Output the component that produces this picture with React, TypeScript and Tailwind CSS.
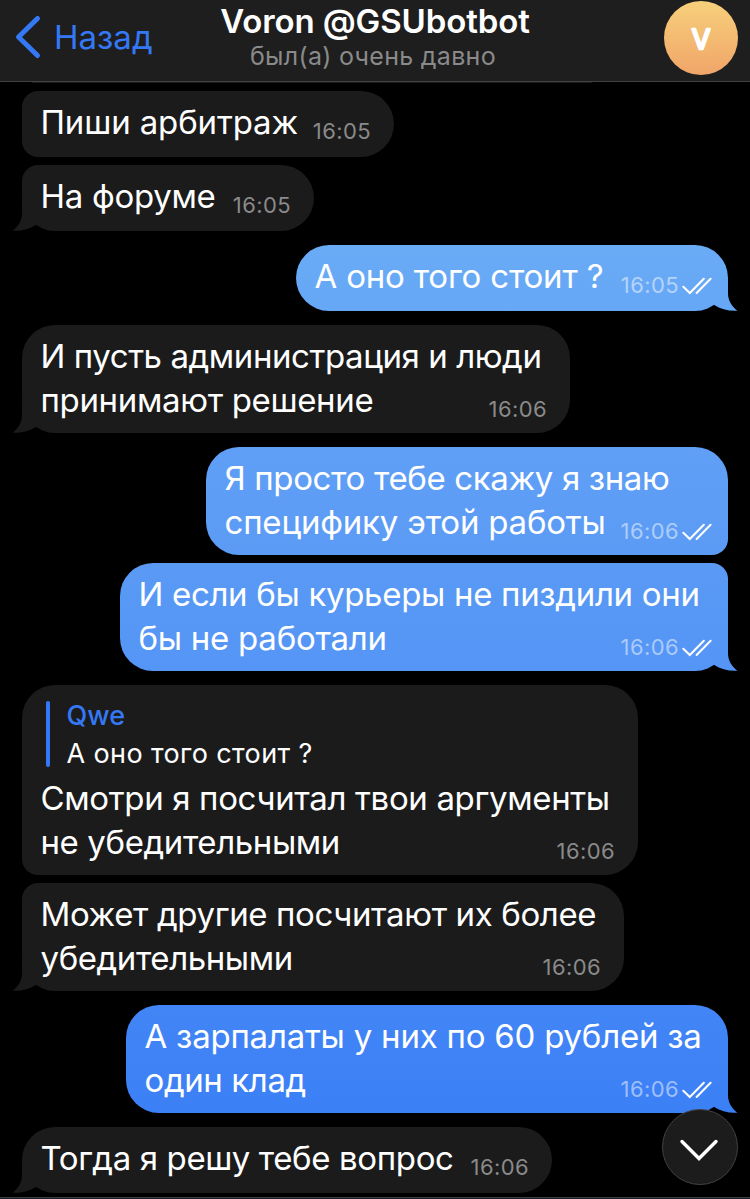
import clsx from 'clsx';

type Line = { text: string; track: string };

type Message = {
  out?: boolean;
  box: string;
  fill: string;
  tail?: string;
  time: string;
  quote?: { name: string; text: string };
  lines: Line[];
};

const messages: Message[] = [
  {
    box: 'mt-[8px] w-[372px] h-[66px] rounded-[33px] rounded-l-[16px]',
    fill: 'bg-[#1b1b1b]',
    time: '16:05',
    lines: [{ text: 'Пиши арбитраж', track: 'tracking-[-0.15px]' }],
  },
  {
    box: 'mt-[8px] w-[292px] h-[66px] rounded-[33px] rounded-tl-[16px]',
    fill: 'bg-[#1b1b1b]',
    tail: 'text-[#1b1b1b]',
    time: '16:05',
    lines: [{ text: 'На форуме', track: 'tracking-[-0.3px]' }],
  },
  {
    out: true,
    box: 'mt-[14px] w-[432px] h-[66px] rounded-[33px]',
    fill: 'bg-linear-to-b from-[#6aabf6] to-[#66a7f6]',
    tail: 'text-[#66a7f6]',
    time: '16:05',
    lines: [{ text: 'А оно того стоит ?', track: 'tracking-[-0.2px]' }],
  },
  {
    box: 'mt-[14px] w-[548px] h-[108px] rounded-[33px]',
    fill: 'bg-[#1b1b1b]',
    tail: 'text-[#1b1b1b]',
    time: '16:06',
    lines: [
      { text: 'И пусть администрация и люди', track: 'tracking-[-0.43px]' },
      { text: 'принимают решение', track: 'tracking-[-0.34px]' },
    ],
  },
  {
    out: true,
    box: 'mt-[14px] w-[522px] h-[108px] rounded-[33px] rounded-br-[16px]',
    fill: 'bg-linear-to-b from-[#609ff6] to-[#5b9bf5]',
    time: '16:06',
    lines: [
      { text: 'Я просто тебе скажу я знаю', track: 'tracking-[-0.36px]' },
      { text: 'специфику этой работы', track: 'tracking-[-0.2px]' },
    ],
  },
  {
    out: true,
    box: 'mt-[8px] w-[608px] h-[108px] rounded-[33px] rounded-tr-[16px]',
    fill: 'bg-linear-to-b from-[#5a9af5] to-[#5495f6]',
    tail: 'text-[#5495f6]',
    time: '16:06',
    lines: [
      { text: 'И если бы курьеры не пиздили они', track: 'tracking-[-0.32px]' },
      { text: 'бы не работали', track: 'tracking-[-0.26px]' },
    ],
  },
  {
    box: 'mt-[14px] w-[616px] h-[190px] rounded-[33px] rounded-bl-[16px]',
    fill: 'bg-[#1b1b1b]',
    time: '16:06',
    quote: { name: 'Qwe', text: 'А оно того стоит ?' },
    lines: [
      { text: 'Смотри я посчитал твои аргументы', track: 'tracking-[-0.35px]' },
      { text: 'не убедительными', track: 'tracking-[-0.4px]' },
    ],
  },
  {
    box: 'mt-[8px] w-[602px] h-[108px] rounded-[33px] rounded-tl-[16px]',
    fill: 'bg-[#1b1b1b]',
    tail: 'text-[#1b1b1b]',
    time: '16:06',
    lines: [
      { text: 'Может другие посчитают их более', track: 'tracking-[-0.38px]' },
      { text: 'убедительными', track: 'tracking-[-0.42px]' },
    ],
  },
  {
    out: true,
    box: 'mt-[14px] w-[602px] h-[108px] rounded-[33px]',
    fill: 'bg-linear-to-b from-[#4285f6] to-[#3c80f6]',
    tail: 'text-[#3c80f6]',
    time: '16:06',
    lines: [
      { text: 'А зарпалаты у них по 60 рублей за', track: 'tracking-[-0.23px]' },
      { text: 'один клад', track: 'tracking-[-0.4px]' },
    ],
  },
  {
    box: 'mt-[14px] w-[530px] h-[66px] rounded-[33px]',
    fill: 'bg-[#1b1b1b]',
    tail: 'text-[#1b1b1b]',
    time: '16:06',
    lines: [{ text: 'Тогда я решу тебе вопрос', track: 'tracking-[-0.36px]' }],
  },
];

function Tail({ out, color }: { out?: boolean; color: string }) {
  return (
    <svg
      width="30"
      height="34"
      viewBox="0 0 30 34"
      className={clsx('absolute bottom-0', color, out ? '-right-[10px] -scale-x-100' : '-left-[10px]')}
    >
      <path d="M10 0V16C10 24 6 29.500 0.700 33.700C9 34.200 17.500 32.300 23.800 28L28 10Z" fill="currentColor" />
    </svg>
  );
}

function Checks() {
  return (
    <svg width="30" height="18" viewBox="0 0 30 18" fill="none" stroke="white" strokeWidth="2" strokeLinecap="round" className="relative top-px ml-[3px]">
      <path d="M1.300 9.700L7.800 16L21.800 1.800M14.600 16L28.600 1.800" />
    </svg>
  );
}

function Bubble({ msg }: { msg: Message }) {
  const last = msg.lines.length - 1;
  return (
    <div className={clsx('relative shrink-0 pt-[9px] pl-[18.5px]', msg.box, msg.fill, msg.out ? 'self-end pr-[16px]' : 'self-start pr-[23px]')}>
      {msg.tail && <Tail out={msg.out} color={msg.tail} />}
      {msg.quote && (
        <div className="mt-[7px] mb-[8px] ml-[5.5px] h-[67px] flex gap-[16.5px]">
          <div className="w-[4px] h-[66px] rounded-full bg-[#3478f6]" />
          <div className="text-[27px] leading-[38px] -mt-[4px]">
            <p className="font-medium text-[#3478f6]">{msg.quote.name}</p>
            <p className="tracking-[0.38px]">{msg.quote.text}</p>
          </div>
        </div>
      )}
      {msg.lines.map((line, i) => (
        <div key={i} className="relative h-[44px] flex justify-between">
          <span className={line.track}>{line.text}</span>
          {i === last && (
            <span className="flex items-center h-[30px] mt-[16px] text-[22px] leading-[30px]">
              <span className={clsx('tracking-[0.4px]', msg.out ? 'text-white/50' : 'text-[#8a8a8a]')}>{msg.time}</span>
              {msg.out && <Checks />}
            </span>
          )}
        </div>
      ))}
    </div>
  );
}

function Header() {
  return (
    <header className="h-[82px] shrink-0 border-b border-[#414141] bg-[#1e1e1e] grid grid-cols-[220px_1fr_220px]">
      <div className="flex text-[#3478f6]">
        <svg width="54" height="81" viewBox="0 0 54 81" fill="none" stroke="currentColor" strokeWidth="5" strokeLinecap="round" strokeLinejoin="round">
          <path d="M37.500 18.500L18.500 37L37.500 55.500" />
        </svg>
        <span className="text-[33px] leading-[44px] mt-[15px]">Назад</span>
      </div>
      <div className="text-center whitespace-nowrap">
        <h1 className="text-[33px] leading-[44px] font-semibold -mt-px tracking-[-0.1px]">Voron @GSUbotbot</h1>
        <p className="text-[25px] leading-[28px] text-[#8a8a8a] -mt-px -ml-[4px] tracking-[0.3px]">был(а) очень давно</p>
      </div>
      <div className="flex justify-end pt-px pr-[12px]">
        <svg width="74" height="74" viewBox="0 0 74 74">
          <defs>
            <linearGradient id="avatar" x1="0" y1="0" x2="0" y2="1">
              <stop offset="0" stopColor="#f7d07b" />
              <stop offset="1" stopColor="#f0a569" />
            </linearGradient>
          </defs>
          <circle cx="37" cy="37" r="37" fill="url(#avatar)" />
          <text x="37" y="47.500" textAnchor="middle" fontSize="27" fontWeight="400" fill="white" stroke="white" strokeWidth="2.400" strokeLinejoin="round">
            V
          </text>
        </svg>
      </div>
    </header>
  );
}

export default function App() {
  return (
    <div className="relative w-[750px] h-[1199px] overflow-hidden bg-black text-white flex flex-col font-['Inter','Noto_Sans',sans-serif] text-[33px] leading-[44px] whitespace-nowrap">
      <Header />
      <main className="flex-1 flex flex-col px-[22px]">
        {/* bottom edge of the message scrolled under the header */}
        <div className="ml-[10px] w-[560px] h-px shrink-0 bg-[#1b1b1b]" />
        {messages.map((msg, i) => (
          <Bubble key={i} msg={msg} />
        ))}
      </main>
      <footer className="h-[2px] shrink-0 border-t border-[#3d3d3d] bg-[#172033]" />
      <button className="absolute left-[662px] top-[1109px] size-[76px] rounded-full border border-[#414143] bg-[#1c1c1d] flex items-center justify-center">
        <svg width="40" height="24" viewBox="0 0 40 24" fill="none" stroke="white" strokeWidth="3.400" strokeLinecap="round" className="relative -left-px mt-[6px]">
          <path d="M3 3.500L20 20.500L37 3.500" />
        </svg>
      </button>
    </div>
  );
}
